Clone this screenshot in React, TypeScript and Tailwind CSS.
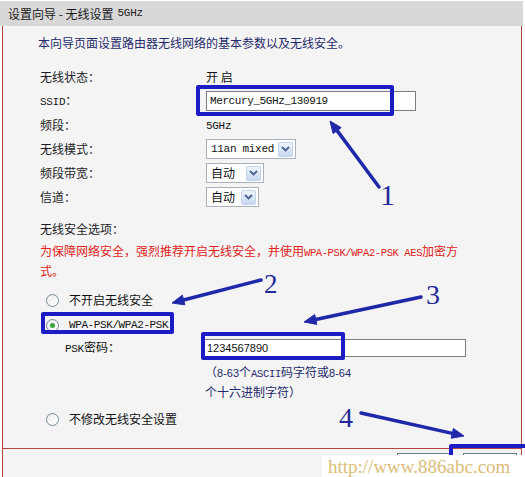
import React from 'react';

const cjk = "font-['Noto_Sans_CJK_SC','Noto_Sans',sans-serif]";
const mono = "font-['Liberation_Mono','Noto_Sans_CJK_SC',monospace]";

type Pt = { x1: number; y1: number; x2: number; y2: number };

// hand-drawn looking pointer arrow: thick shaft + triangular head at (x2,y2)
const Arrow: React.FC<Pt> = ({ x1, y1, x2, y2 }) => {
  const dx = x2 - x1;
  const dy = y2 - y1;
  const len = Math.sqrt(dx * dx + dy * dy);
  const ux = dx / len;
  const uy = dy / len;
  const head = 12;
  const bx = x2 - ux * head;
  const by = y2 - uy * head;
  const px = -uy * 5;
  const py = ux * 5;
  return (
    <g fill="#1f28a8" stroke="#1f28a8">
      <line x1={x1} y1={y1} x2={bx} y2={by} strokeWidth={3.5} strokeLinecap="round" />
      <polygon points={`${x2},${y2} ${bx + px},${by + py} ${bx - px},${by - py}`} strokeWidth={1} />
    </g>
  );
};

const Select: React.FC<{ label: string; w: string; isMono?: boolean }> = ({ label, w, isMono }) => (
  <div className={`${w} h-[20px] border border-[#a7b0bb] bg-white flex items-center justify-between pl-[4px] pr-[2px]`}>
    <span className={isMono ? `${mono} text-[11px] tracking-[-0.3px] text-[#111]` : 'text-[12px] text-[#111]'}>{label}</span>
    <span className="w-[15px] h-[15px] rounded-[2px] border border-[#c3d3ec] bg-gradient-to-b from-[#eef4fc] to-[#c9d9f2] flex items-center justify-center">
      <svg width="9" height="6" viewBox="0 0 9 6">
        <path d="M1 1 L4.5 4.5 L8 1" stroke="#4a5f8c" strokeWidth="1.8" fill="none" />
      </svg>
    </span>
  </div>
);

const Radio: React.FC<{ checked?: boolean }> = ({ checked }) => (
  <span className="w-[13px] h-[13px] rounded-full border border-[#7b8896] bg-gradient-to-br from-[#e9ecef] to-white flex items-center justify-center shrink-0">
    {checked && <span className="w-[5px] h-[5px] rounded-full bg-[#3aa53a]" />}
  </span>
);

const Row: React.FC<{ label: React.ReactNode; children: React.ReactNode }> = ({ label, children }) => (
  <div className="grid grid-cols-[166px_1fr] h-[24px] items-center">
    <div className="text-[#1c1c24]">{label}</div>
    <div>{children}</div>
  </div>
);

const Box: React.FC<{ className: string }> = ({ className }) => (
  <div className={`absolute border-[4px] border-[#1c1cc4] rounded-[2px] ${className}`} />
);

export default function App() {
  return (
    <div className={`relative w-[525px] h-[477px] bg-white overflow-hidden text-[12px] ${cjk}`}>
      <div className="ml-[2px] w-[520px]">
        {/* title bar */}
        <div className="h-[25px] -ml-[2px] w-[523px] bg-[#d8d8d8] flex items-center pl-[8px] text-[#1a1a1a] mt-[1px]">
          设置向导 - 无线设置 <span className={`${mono} text-[11px] tracking-[-0.3px] ml-[4px]`}>5GHz</span>
        </div>

        {/* form body */}
        <div className="h-[422px] border-l border-r border-[#b4463e] bg-[#f4f4f4] pt-[8px]">
          <div className="pl-[35px] leading-[18px] text-[#1f2b6c]">本向导页面设置路由器无线网络的基本参数以及无线安全。</div>

          <div className="mt-[13px] pl-[37px]">
            <Row label="无线状态：">
              <span className="text-[#111]">开 启</span>
            </Row>
            <Row label={<span><span className={`${mono} text-[11px] tracking-[-0.3px]`}>SSID</span>：</span>}>
              <div className="w-[210px] h-[20px] border border-[#7c7c7c] bg-white flex items-center pl-[3px]">
                <span className={`${mono} text-[11px] tracking-[-0.4px] text-[#111]`}>Mercury_5GHz_130919</span>
              </div>
            </Row>
            <Row label="频段：">
              <span className={`${mono} text-[11px] tracking-[-0.3px] text-[#111]`}>5GHz</span>
            </Row>
            <Row label="无线模式：">
              <Select label="11an mixed" w="w-[90px]" isMono />
            </Row>
            <Row label="频段带宽：">
              <Select label="自动" w="w-[58px]" />
            </Row>
            <Row label="信道：">
              <Select label="自动" w="w-[53px]" />
            </Row>

            <div className="mt-[10px] leading-[19px] text-[#1c1c24]">无线安全选项：</div>
            <div className="mt-[4px] leading-[18px] text-[#e3221b]">
              为保障网络安全，强烈推荐开启无线安全，并使用
              <span className={`${mono} text-[10.5px] tracking-[-0.4px]`}>WPA-PSK/WPA2-PSK AES</span>加密方
              <br />
              式。
            </div>
          </div>

          <div className="pl-[43px]">
            <div className="mt-[9px] h-[22px] flex items-center gap-[10px] text-[#111]">
              <Radio />
              <span>不开启无线安全</span>
            </div>
            <div className="mt-[3px] h-[22px] flex items-center gap-[10px] text-[#111]">
              <Radio checked />
              <span className={`${mono} text-[11px] tracking-[-0.4px]`}>WPA-PSK/WPA2-PSK</span>
            </div>
          </div>

          <div className="mt-[1px] pl-[62px] grid grid-cols-[138px_1fr] h-[22px] items-center text-[#111]">
            <span>
              <span className={`${mono} text-[11px] tracking-[-0.3px]`}>PSK</span>密码：
            </span>
            <div className="w-[263px] h-[18px] border border-[#7c7c7c] bg-white flex items-center pl-[3px]">
              <span className="font-['Liberation_Sans',sans-serif] text-[11px] text-[#111]">1234567890</span>
            </div>
          </div>

          <div className="mt-[4px] pl-[202px] leading-[18px] text-[#1f2b6c]">
            （<span className="font-['Liberation_Sans',sans-serif] text-[11px]">8-63</span>个<span className={`${mono} text-[10.5px] tracking-[-0.3px]`}>ASCII</span>码字符或<span className="font-['Liberation_Sans',sans-serif] text-[11px]">8-64</span>
            <br />
            个十六进制字符）
          </div>

          <div className="mt-[7px] pl-[43px] h-[22px] flex items-center gap-[10px] text-[#111]">
            <Radio />
            <span>不修改无线安全设置</span>
          </div>
        </div>

        {/* footer with buttons */}
        <div className="h-[30px] border-l border-r border-t border-[#b4463e] bg-[#f4f4f4] flex justify-end items-start pt-[4px] pr-[4px] gap-[12px]">
          <div className="w-[54px] h-[24px] border border-[#6f7c8a] bg-gradient-to-b from-white to-[#e2e6ea]" />
          <div className="w-[54px] h-[24px] border border-[#6f7c8a] bg-gradient-to-b from-white to-[#e2e6ea]" />
        </div>
      </div>

      {/* annotation overlay */}
      <Box className="left-[196px] top-[85px] w-[198px] h-[31px]" />
      <Box className="left-[41px] top-[312px] w-[133px] h-[22px]" />
      <Box className="left-[201px] top-[332px] w-[144px] h-[28px]" />
      <Box className="left-[449px] top-[444px] w-[80px] h-[40px]" />

      <svg className="absolute inset-0 pointer-events-none" width="525" height="477">
        <Arrow x1={379} y1={187} x2={330} y2={121} />
        <Arrow x1={261} y1={280} x2={172} y2={303} />
        <Arrow x1={421} y1={297} x2={304} y2={322} />
        <Arrow x1={361} y1={413} x2={464} y2={436} />
      </svg>

      <span className="absolute left-[380px] top-[180px] font-['Liberation_Serif',serif] text-[30px] leading-none text-[#23289a]">1</span>
      <span className="absolute left-[264px] top-[271px] font-['Liberation_Serif',serif] text-[27px] leading-none text-[#23289a]">2</span>
      <span className="absolute left-[426px] top-[281px] font-['Liberation_Serif',serif] text-[28px] leading-none text-[#23289a]">3</span>
      <span className="absolute left-[339px] top-[404px] font-['Liberation_Serif',serif] text-[28px] leading-none text-[#23289a]">4</span>

      <div className="absolute left-[322px] top-[455px] w-[203px] h-[22px] bg-white flex items-center pl-[6px]">
        <span className="font-['Liberation_Serif',serif] text-[19px] leading-none text-[#dcbd78]">http://www.886abc.com</span>
      </div>
    </div>
  );
}
